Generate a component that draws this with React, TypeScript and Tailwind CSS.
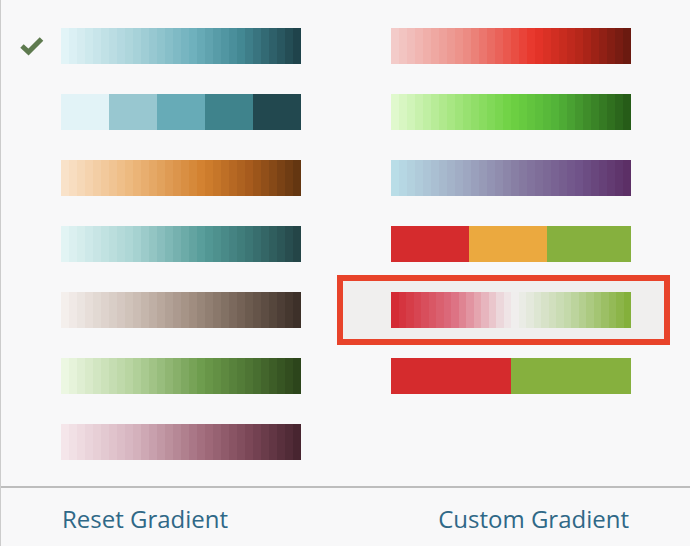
type Stop = [number, string];

function hexToRgb(h: string) {
  const n = parseInt(h.slice(1), 16);
  return [(n >> 16) & 255, (n >> 8) & 255, n & 255];
}

function colorAt(stops: Stop[], t: number) {
  for (let i = 0; i < stops.length - 1; i++) {
    const [p0, c0] = stops[i];
    const [p1, c1] = stops[i + 1];
    if (t >= p0 && t <= p1) {
      const f = p1 === p0 ? 0 : (t - p0) / (p1 - p0);
      const a = hexToRgb(c0);
      const b = hexToRgb(c1);
      const m = a.map((v, k) => Math.round(v + (b[k] - v) * f));
      return `rgb(${m[0]}, ${m[1]}, ${m[2]})`;
    }
  }
  return stops[stops.length - 1][1];
}

function BandedBar({ stops, n = 30 }: { stops: Stop[]; n?: number }) {
  const cells = Array.from({ length: n }, (_, i) => colorAt(stops, i / (n - 1)));
  return (
    <div className="flex h-9 w-[240px]">
      {cells.map((c, i) => (
        <div key={i} className="h-full flex-1" style={{ backgroundColor: c }} />
      ))}
    </div>
  );
}

function StepBar({ colors }: { colors: [string, number][] }) {
  return (
    <div className="flex h-9 w-[240px]">
      {colors.map(([c, w], i) => (
        <div key={i} className="h-full" style={{ backgroundColor: c, width: w }} />
      ))}
    </div>
  );
}

function Check() {
  return (
    <svg width="24" height="20" viewBox="0 0 24 20" className="block">
      <path d="M2 10 L8.5 16 L21.5 3" fill="none" stroke="#5e7a4f" strokeWidth="5" strokeLinejoin="miter" />
    </svg>
  );
}

const left: React.ReactNode[] = [
  <BandedBar stops={[[0, "#e2f4f7"], [0.3, "#a9d3da"], [0.55, "#6fb1bd"], [0.75, "#448a96"], [1, "#1f434b"]]} />,
  <StepBar colors={[["#e2f3f7", 48], ["#98c7d0", 48], ["#67abb7", 48], ["#3f838c", 48], ["#22484f", 48]]} />,
  <BandedBar stops={[[0, "#f9e2c9"], [0.3, "#ecb67a"], [0.6, "#d2802e"], [0.8, "#a55a1c"], [1, "#643611"]]} />,
  <BandedBar stops={[[0, "#e2f4f4"], [0.3, "#a9d4d3"], [0.6, "#559b98"], [0.8, "#3b7574"], [1, "#244547"]]} />,
  <BandedBar stops={[[0, "#f4efec"], [0.3, "#cdbfb6"], [0.55, "#a08d80"], [0.8, "#6b5a4e"], [1, "#3d3029"]]} />,
  <BandedBar stops={[[0, "#ecf7e2"], [0.3, "#b4d29c"], [0.6, "#6b9a4a"], [0.8, "#4d7433"], [1, "#2c451b"]]} />,
  <BandedBar stops={[[0, "#f5e6ea"], [0.3, "#d6b3be"], [0.6, "#a26c7c"], [0.8, "#7a4656"], [1, "#482530"]]} />,
];

const right: React.ReactNode[] = [
  <BandedBar stops={[[0, "#f3cbc9"], [0.3, "#ec8e86"], [0.6, "#e8352a"], [0.8, "#b42619"], [1, "#6b1a10"]]} />,
  <BandedBar stops={[[0, "#e0f9cd"], [0.25, "#a6e680"], [0.5, "#6ed243"], [0.7, "#52b238"], [1, "#265c18"]]} />,
  <BandedBar stops={[[0, "#b9dde7"], [0.3, "#9fa9c2"], [0.55, "#8579a0"], [0.8, "#6f5288"], [1, "#5c2f66"]]} />,
  <StepBar colors={[["#d52b2d", 78], ["#eba93f", 78], ["#86b03e", 84]]} />,
  <BandedBar n={32} stops={[[0, "#d42b35"], [0.25, "#dc6f80"], [0.47, "#eee0e3"], [0.52, "#f0efee"], [0.75, "#c2d8a8"], [1, "#84b03b"]]} />,
  <StepBar colors={[["#d52b2d", 120], ["#86b03e", 120]]} />,
];

export default function App() {
  const rows = Array.from({ length: 7 }, (_, i) => i);
  return (
    <div className="w-[690px] h-[546px] bg-[#f8f8f9] border-l border-[#cccccc] flex flex-col font-['Open_Sans',sans-serif]">
      <div className="pt-[13px] pb-[11px] border-b-2 border-[#bdbdbd]">
        {rows.map((i) => (
          <div key={i} className="grid grid-cols-[329px_1fr] h-[66px] items-center">
            <div className="flex items-center">
              <div className="w-[60px] flex justify-start pl-[19px]">{i === 0 && <Check />}</div>
              {left[i]}
            </div>
            <div className="flex items-center pl-[61px]">
              {right[i] && (
                <div className="relative">
                  {i === 4 && (
                    <div className="absolute -top-[17px] -bottom-[17px] -left-[54px] -right-[39px] border-[6px] border-[#e8432a] bg-[#f0efee]" />
                  )}
                  <div className="relative">{right[i]}</div>
                </div>
              )}
            </div>
          </div>
        ))}
      </div>
      <div className="flex-1 flex items-center justify-between pl-[61px] pr-[61px] pt-[4px] text-[24px] text-[#2f6887]">
        <span>Reset Gradient</span>
        <span>Custom Gradient</span>
      </div>
    </div>
  );
}
